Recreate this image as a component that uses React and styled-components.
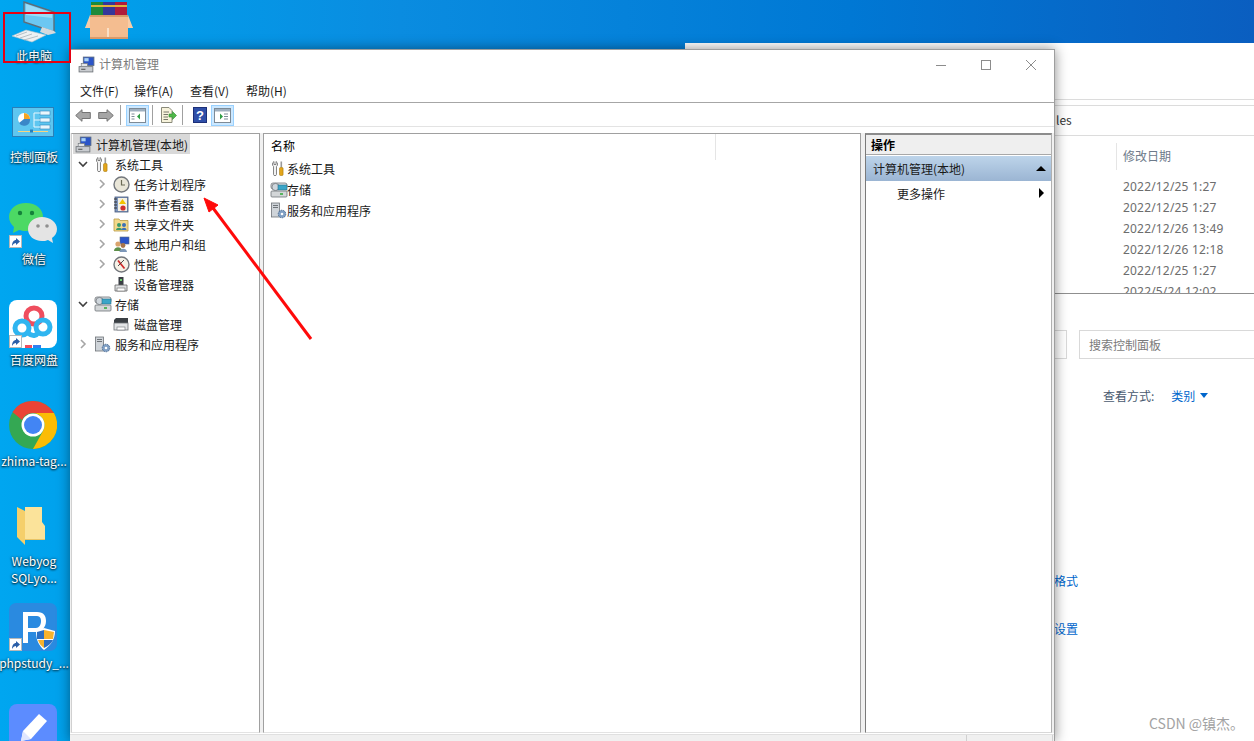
import { createGlobalStyle } from 'styled-components';
import styled from 'styled-components';

const UI_FONT = `"Noto Sans CJK SC", "Noto Sans", sans-serif`;

const dates = ['2022/12/25 1:27', '2022/12/25 1:27', '2022/12/26 13:49', '2022/12/26 12:18', '2022/12/25 1:27', '2022/5/24 12:02'];

function Shortcut() {
    return (
        <svg width="13" height="13" viewBox="0 0 13 13">
            <rect x="0.5" y="0.5" width="12" height="12" fill="#fff" stroke="#b8b8b8" />
            <path d="M3 11 C3 7 5 5 7 5 L7 3 L11 6.5 L7 10 L7 8 C5.5 8 4 9 3 11Z" fill="#2a5ea8" />
        </svg>
    );
}

function ComputerDesk() {
    return (
        <svg width="48" height="44" viewBox="0 0 48 44">
            <path d="M12 2 L42 12 L42 32 L12 22Z" fill="#6cc7f2" stroke="#5d6d78" strokeWidth="1.4" />
            <path d="M14 4 L40 13 L40 18 L14 15Z" fill="#9bdcf8" />
            <path d="M30 27 L42 31 L44 33 L36 35 L28 32Z" fill="#d5dade" />
            <path d="M0 36 L14 30 L34 35 L20 42Z" fill="#eef1f3" stroke="#b9c2c8" strokeWidth="0.6" />
            <path d="M4 36 L15 32 M8 38 L20 34 M12 40 L26 36" stroke="#aab3b9" strokeWidth="0.8" />
        </svg>
    );
}

function BooksBox() {
    return (
        <svg width="48" height="40" viewBox="0 0 48 40">
            <rect x="6" y="2" width="12" height="18" fill="#1f8a3a" />
            <rect x="18" y="2" width="12" height="18" fill="#35379a" />
            <rect x="30" y="2" width="12" height="18" fill="#b01c3c" />
            <rect x="6" y="5" width="36" height="2" fill="#e0b23c" />
            <path d="M8 15 L40 15 L48 28 L0 28Z" fill="#eeb78c" />
            <rect x="5" y="15" width="38" height="24" fill="#f4bd90" />
            <rect x="5" y="15" width="38" height="2" fill="#d89a68" />
            <path d="M5 15 L0 28 L5 28Z M43 15 L48 28 L43 28Z" fill="#f7cda8" />
            <rect x="22" y="28" width="2" height="11" fill="#fbe0c6" />
            <rect x="5" y="37" width="38" height="2" fill="#dd9c6c" />
        </svg>
    );
}

function ControlPanel() {
    return (
        <svg width="42" height="30" viewBox="0 0 42 30">
            <rect x="0.5" y="0.5" width="41" height="29" fill="#5ec6f0" stroke="#2a7fb8" />
            <circle cx="12" cy="12" r="6" fill="#fff" />
            <path d="M12 12 L12 6 A6 6 0 0 1 18 12Z" fill="#f5a524" />
            <path d="M12 12 L18 12 A6 6 0 0 1 7 16Z" fill="#3a87c8" />
            <rect x="28" y="4" width="10" height="4" fill="#e8f6fd" stroke="#2a7fb8" strokeWidth="0.6" />
            <rect x="28" y="11" width="10" height="4" fill="#e8f6fd" stroke="#2a7fb8" strokeWidth="0.6" />
            <rect x="28" y="18" width="10" height="4" fill="#e8f6fd" stroke="#2a7fb8" strokeWidth="0.6" />
            <path d="M22 6 L28 6 M22 6 L22 20 L28 20 M22 13 L28 13" stroke="#e8f6fd" fill="none" />
            <rect x="6" y="24" width="30" height="1" fill="#f7d580" />
            <rect x="18" y="22.500" width="3" height="3" fill="#2a7fb8" />
        </svg>
    );
}

function WeChat() {
    return (
        <svg width="48" height="41" viewBox="0 0 48 41">
            <path d="M17 0 C27 0 34 6 34 14 C34 22 27 28 17 28 C14 28 12 27.500 10 27 L4 30 L5 24 C2 21 0 18 0 14 C0 6 7 0 17 0Z" fill="#4cd964" />
            <circle cx="11" cy="10" r="2.200" fill="#14823a" />
            <circle cx="23" cy="10" r="2.200" fill="#14823a" />
            <path d="M33 14 C41 14 48 19 48 26 C48 30 46 33 43 35 L44 40 L39 37 C37 38 35 38 33 38 C25 38 19 33 19 26 C19 19 25 14 33 14Z" fill="#e4e4e4" />
            <circle cx="29" cy="23" r="1.800" fill="#8f8f8f" />
            <circle cx="38" cy="23" r="1.800" fill="#8f8f8f" />
        </svg>
    );
}

function BaiduDisk() {
    return (
        <svg width="48" height="48" viewBox="0 0 48 48">
            <rect width="48" height="48" rx="8" fill="#fff" />
            <circle cx="25" cy="16" r="8" fill="none" stroke="#ef4e5e" strokeWidth="5" />
            <circle cx="13" cy="28" r="7" fill="none" stroke="#2fb5f0" strokeWidth="5" />
            <circle cx="34" cy="27" r="7" fill="none" stroke="#2fb5f0" strokeWidth="5" />
            <path d="M19 33 C24 37 27 36 30 32" fill="none" stroke="#2fb5f0" strokeWidth="5" />
            <rect x="16" y="45" width="7" height="3" fill="#ef4e5e" />
            <rect x="24" y="45" width="8" height="3" fill="#2f7ff0" />
        </svg>
    );
}

function Chrome() {
    return (
        <svg width="48" height="48" viewBox="0 0 48 48">
            <circle cx="24" cy="24" r="24" fill="#34a853" />
            <path d="M24 0 A24 24 0 0 1 45 12 L24 12 A12 12 0 0 0 13 19 L3.500 11 A24 24 0 0 1 24 0Z" fill="#ea4335" />
            <path d="M45 12 A24 24 0 0 1 24 48 L34 30 A12 12 0 0 0 24 12Z" fill="#fbbc05" />
            <circle cx="24" cy="24" r="11.500" fill="#fff" />
            <circle cx="24" cy="24" r="9" fill="#4285f4" />
        </svg>
    );
}

function Folder() {
    return (
        <svg width="28" height="39" viewBox="0 0 28 39">
            <path d="M8 1 L25 1 L25 16 L28 20 L28 33 L8 33Z" fill="#fbe39a" />
            <path d="M0 1 L8 5 L8 39 L0 31Z" fill="#f5cf6b" />
            <path d="M8 33 L28 33 L28 34 L8 34Z" fill="#e8c466" />
        </svg>
    );
}

function PhpStudy() {
    return (
        <svg width="48" height="48" viewBox="0 0 48 48">
            <rect width="48" height="48" rx="7" fill="#2a8ae0" />
            <path d="M14 9 L28 9 C35 9 37 13 37 18 C37 24 33 29 27 29 L19 29 L19 40 L14 40Z M19 13 L19 25 L27 25 C30 25 32 22 32 18 C32 14 30 13 27 13Z" fill="#fff" />
            <path d="M27 28 L35 25 L46 28 C46 36 42 42 35 47 C30 43 27 37 27 28Z" fill="#fff" />
            <path d="M28 29 L35 27 L35 36 L28 36Z" fill="#2a6fc4" />
            <path d="M35 27 L45 29 L44 36 L35 36Z" fill="#f6b22d" />
            <path d="M29 37 L35 37 L35 45 C32 43 30 40 29 37Z" fill="#f6b22d" />
            <path d="M35 37 L44 37 C42 41 39 43 35 45Z" fill="#2a6fc4" />
        </svg>
    );
}

function PenApp() {
    return (
        <svg width="48" height="48" viewBox="0 0 48 48">
            <rect width="48" height="48" rx="8" fill="#5c8cff" />
            <path d="M30 10 L38 17 L22 35 L12 37 L14 27Z" fill="#fff" />
            <path d="M14 27 L22 35 L12 37Z" fill="#dfe6ff" />
        </svg>
    );
}

function MmcSmall() {
    return (
        <svg width="17" height="17" viewBox="0 0 16 16">
            <rect x="5" y="1" width="10" height="8" fill="#2b55c8" stroke="#5a6b80" strokeWidth="0.8" />
            <rect x="6" y="2" width="4" height="3" fill="#a9d2f5" />
            <rect x="1" y="10" width="13" height="5" fill="#c9ccd0" stroke="#6e7378" strokeWidth="0.8" />
            <rect x="3" y="7" width="6" height="3" fill="#e3e5e7" stroke="#6e7378" strokeWidth="0.6" />
            <rect x="3" y="12" width="4" height="1" fill="#555" />
        </svg>
    );
}

function Tools() {
    return (
        <svg width="16" height="17" viewBox="0 0 16 16">
            <path d="M4 1 L4 4 L6 4 L6 1 C8 2 8 5 6.500 6 L6.500 14 C6.500 15.500 3.500 15.500 3.500 14 L3.500 6 C2 5 2 2 4 1Z" fill="#f2f2f2" stroke="#6a6a6a" strokeWidth="0.8" />
            <rect x="10.500" y="1" width="1.600" height="6" fill="#9a9a9a" />
            <rect x="9.500" y="7" width="3.600" height="8" rx="1" fill="#e3a51a" stroke="#9a6c00" strokeWidth="0.5" />
        </svg>
    );
}

function Clock() {
    return (
        <svg width="17" height="17" viewBox="0 0 17 17">
            <circle cx="8.500" cy="8.500" r="7.500" fill="#e9e6d8" stroke="#73777c" strokeWidth="1.400" />
            <path d="M8.500 4 L8.500 9 L12 9" fill="none" stroke="#6b6a55" strokeWidth="1.200" />
        </svg>
    );
}

function EventLog() {
    return (
        <svg width="16" height="17" viewBox="0 0 16 17">
            <rect x="2" y="1" width="13" height="15" fill="#7f96bd" stroke="#45587c" strokeWidth="0.8" />
            <rect x="5" y="2" width="9" height="13" fill="#f3f0e4" />
            <path d="M1 3 H4 M1 6 H4 M1 9 H4 M1 12 H4" stroke="#333" />
            <path d="M9.500 3 L13 8 L6 8Z" fill="#f2c200" />
            <circle cx="10" cy="12" r="2.600" fill="#cf2f2f" />
        </svg>
    );
}

function SharedFolder() {
    return (
        <svg width="17" height="16" viewBox="0 0 17 16">
            <path d="M1 3 L6 3 L7 4.500 L15 4.500 L15 15 L1 15Z" fill="#f3d98b" stroke="#b79a45" strokeWidth="0.8" />
            <circle cx="6" cy="9" r="2" fill="#3a9a6b" />
            <path d="M3 14 C3 11 9 11 9 14Z" fill="#3a9a6b" />
            <circle cx="11" cy="9" r="2" fill="#3d71b8" />
            <path d="M8.500 14 C8.500 11 13.500 11 13.500 14Z" fill="#3d71b8" />
        </svg>
    );
}

function UsersIcon() {
    return (
        <svg width="17" height="17" viewBox="0 0 17 17">
            <rect x="7" y="1" width="9" height="7" fill="#2b55c8" stroke="#5a6b80" strokeWidth="0.6" />
            <circle cx="5" cy="8" r="2.600" fill="#d9a36d" />
            <path d="M1 15 C1 10 9 10 9 15Z" fill="#5c8f4a" />
            <circle cx="10" cy="9.500" r="2.400" fill="#a8754a" />
            <path d="M6.500 16 C6.500 11.500 14 11.500 14 16Z" fill="#7d97b8" />
        </svg>
    );
}

function Perf() {
    return (
        <svg width="17" height="17" viewBox="0 0 17 17">
            <circle cx="8.500" cy="8.500" r="7.500" fill="#f5f1e6" stroke="#73777c" strokeWidth="1.400" />
            <path d="M5 4.500 L11.500 12.500" stroke="#d02a2a" strokeWidth="1.800" />
            <path d="M5 10 L8 7 L11 4" stroke="#3b3b3b" strokeWidth="0.9" fill="none" />
        </svg>
    );
}

function DeviceMgr() {
    return (
        <svg width="16" height="16" viewBox="0 0 16 16">
            <rect x="5.500" y="1" width="5" height="8" fill="#3a3f44" />
            <rect x="7" y="3" width="2" height="2" fill="#6fd06f" />
            <path d="M2 9 L14 9 L14 15 L2 15Z" fill="#dfe1e3" stroke="#666" strokeWidth="0.8" />
            <rect x="4" y="12" width="8" height="3" fill="#fff" stroke="#666" strokeWidth="0.6" />
        </svg>
    );
}

function Storage() {
    return (
        <svg width="18" height="16" viewBox="0 0 18 16">
            <rect x="1" y="1" width="16" height="6" rx="2" fill="#e0e2e4" stroke="#6e7378" strokeWidth="0.8" />
            <circle cx="5.500" cy="5" r="3.600" fill="#cfd6dc" stroke="#6e7378" strokeWidth="0.8" />
            <rect x="8" y="3" width="9" height="5" fill="#3aa5c8" stroke="#2a6f8a" strokeWidth="0.6" />
            <rect x="1" y="9" width="16" height="6" rx="1" fill="#d3d6d8" stroke="#6e7378" strokeWidth="0.8" />
            <rect x="10" y="11" width="3" height="2" fill="#57b45f" />
        </svg>
    );
}

function Disk() {
    return (
        <svg width="16" height="16" viewBox="0 0 16 16">
            <path d="M3 2 L15 2 L15 7 L1 7 L1 4Z" fill="#3a3f44" />
            <rect x="1" y="7" width="14" height="7" fill="#e3e5e7" stroke="#6e7378" strokeWidth="0.8" />
            <rect x="4" y="11" width="8" height="3" fill="#fff" stroke="#6e7378" strokeWidth="0.6" />
        </svg>
    );
}

function Services() {
    return (
        <svg width="17" height="17" viewBox="0 0 17 17">
            <rect x="1.500" y="1" width="8" height="14" fill="#cfd4d9" stroke="#6e7378" strokeWidth="0.8" />
            <path d="M3 3.500 H8 M3 5.500 H8" stroke="#6e7378" />
            <circle cx="12" cy="12" r="3.800" fill="#7f9fc4" stroke="#3f5f86" strokeWidth="0.8" strokeDasharray="1.500 0.800" />
            <circle cx="12" cy="12" r="1.300" fill="#fff" />
        </svg>
    );
}

function NavArrow({ flip }) {
    return (
        <svg width="16" height="13" viewBox="0 0 16 13" style={flip ? { transform: 'scaleX(-1)' } : undefined}>
            <path d="M0.700 6.500 L7 0.700 L7 3.500 L15.300 3.500 L15.300 9.500 L7 9.500 L7 12.300Z" fill="#a6a6a6" stroke="#747474" />
        </svg>
    );
}

function TreePaneIcon({ right }) {
    return (
        <svg width="17" height="15" viewBox="0 0 17 15">
            <rect x="0.500" y="0.500" width="16" height="14" fill="#fff" stroke="#7d8a96" />
            <rect x="1" y="1" width="15" height="2.500" fill="#9fb0c0" />
            <path d={right ? 'M10 6 L14 6 M10 8.500 L14 8.500 M10 11 L14 11' : 'M2.500 6 L5.500 6 M2.500 8.500 L5.500 8.500 M2.500 11 L5.500 11'} stroke="#7d8a96" />
            <path d={right ? 'M6 5.500 L9 8.500 L6 11.500Z' : 'M11 5.500 L8 8.500 L11 11.500Z'} fill="#2f9e44" />
        </svg>
    );
}

function ExportIcon() {
    return (
        <svg width="17" height="16" viewBox="0 0 17 16">
            <path d="M1.500 0.500 L9 0.500 L12 3.500 L12 15.500 L1.500 15.500Z" fill="#f7f3dc" stroke="#8a8a7a" />
            <path d="M3.500 5 H9 M3.500 7.500 H8 M3.500 10 H8 M3.500 12.500 H8" stroke="#77776a" />
            <path d="M9 7 L12.500 7 L12.500 4.500 L16.500 8.500 L12.500 12.500 L12.500 10 L9 10Z" fill="#4fb848" stroke="#2f8a2f" strokeWidth="0.6" />
        </svg>
    );
}

function HelpIcon() {
    return (
        <svg width="14" height="16" viewBox="0 0 14 16">
            <rect width="14" height="16" fill="#2f4fa8" />
            <rect x="0.500" y="0.500" width="13" height="15" fill="none" stroke="#1c2f78" />
            <text x="7" y="12.500" textAnchor="middle" fontSize="13" fontWeight="700" fill="#fff" fontFamily="Liberation Sans, sans-serif">?</text>
        </svg>
    );
}

function Chevron({ open }) {
    return (
        <svg width="10" height="10" viewBox="0 0 10 10">
            {open
                ? <path d="M1 3 L5 7 L9 3" fill="none" stroke="#404040" strokeWidth="1.600" />
                : <path d="M3 1 L7 5 L3 9" fill="none" stroke="#a6a6a6" strokeWidth="1.600" />}
        </svg>
    );
}

const desktopIcons = [
    { top: 0, left: 0, art: <ComputerDesk />, artLeft: 12, lines: ['此电脑'], labelTop: 47 },
    { top: 0, left: 85, art: <BooksBox />, artLeft: 0, lines: [] },
    { top: 107, left: 0, art: <ControlPanel />, artLeft: 12, lines: ['控制面板'], labelTop: 41 },
    { top: 203, left: 0, art: <WeChat />, artLeft: 9, lines: ['微信'], labelTop: 47, shortcut: 32 },
    { top: 300, left: 0, art: <BaiduDisk />, artLeft: 9, lines: ['百度网盘'], labelTop: 51, shortcut: 35 },
    { top: 401, left: 0, art: <Chrome />, artLeft: 9, lines: ['zhima-tag...'], labelTop: 51 },
    { top: 506, left: 0, art: <Folder />, artLeft: 17, lines: ['Webyog', 'SQLyo...'], labelTop: 46 },
    { top: 603, left: 0, art: <PhpStudy />, artLeft: 9, lines: ['phpstudy_...'], labelTop: 51, shortcut: 35 },
    { top: 704, left: 0, art: <PenApp />, artLeft: 9, lines: [] },
];

const treeRows = [
    { label: '系统工具', level: 0, open: true, icon: <Tools /> },
    { label: '任务计划程序', level: 1, icon: <Clock /> },
    { label: '事件查看器', level: 1, icon: <EventLog /> },
    { label: '共享文件夹', level: 1, icon: <SharedFolder /> },
    { label: '本地用户和组', level: 1, icon: <UsersIcon /> },
    { label: '性能', level: 1, icon: <Perf /> },
    { label: '设备管理器', level: 1, leaf: true, icon: <DeviceMgr /> },
    { label: '存储', level: 0, open: true, icon: <Storage /> },
    { label: '磁盘管理', level: 1, leaf: true, icon: <Disk /> },
    { label: '服务和应用程序', level: 0, icon: <Services /> },
];

const listRows = [
    { label: '系统工具', icon: <Tools /> },
    { label: '存储', icon: <Storage /> },
    { label: '服务和应用程序', icon: <Services /> },
];

export default function App() {
    return (
        <>
            <GlobalStyle />
            <Desktop>
                {desktopIcons.map((item, index) => (
                    <DesktopIcon key={index} $top={item.top} $left={item.left}>
                        <IconArt $left={item.artLeft}>
                            {item.art}
                            {item.shortcut && <ShortcutBadge $top={item.shortcut}><Shortcut /></ShortcutBadge>}
                        </IconArt>
                        {item.lines.length > 0 && (
                            <IconLabel $top={item.labelTop}>
                                {item.lines.map((line) => <div key={line}>{line}</div>)}
                            </IconLabel>
                        )}
                    </DesktopIcon>
                ))}

                <ExplorerWindow>
                    <ExplorerLine $top={56} />
                    <ExplorerLine $top={62} />
                    <ExplorerLine $top={92} />
                    <PathTail>les</PathTail>
                    <ColumnHead>修改日期</ColumnHead>
                    <DateList>
                        {dates.map((date, index) => <DateRow key={index}>{date}</DateRow>)}
                    </DateList>
                </ExplorerWindow>

                <ControlWindow>
                    <SearchRow>
                        <SearchStub />
                        <SearchBox>搜索控制面板</SearchBox>
                    </SearchRow>
                    <ViewRow>
                        <span>查看方式:</span>
                        <ViewLink>类别</ViewLink>
                        <ViewCaret />
                    </ViewRow>
                    <PanelLink $top={278}>格式</PanelLink>
                    <PanelLink $top={326}>设置</PanelLink>
                </ControlWindow>

                <Watermark>CSDN @镇杰。</Watermark>

                <MmcWindow>
                    <TitleBar>
                        <MmcSmall />
                        <TitleText>计算机管理</TitleText>
                        <WindowButtons>
                            <svg width="12" height="12" viewBox="0 0 12 12"><path d="M1 6.500 H11" stroke="#8c8c8c" /></svg>
                            <svg width="12" height="12" viewBox="0 0 12 12"><rect x="1.500" y="1.500" width="9" height="9" fill="none" stroke="#8c8c8c" /></svg>
                            <svg width="12" height="12" viewBox="0 0 12 12"><path d="M1 1 L11 11 M11 1 L1 11" stroke="#8c8c8c" /></svg>
                        </WindowButtons>
                    </TitleBar>
                    <MenuBar>
                        <MenuItem $width={54}>文件(F)</MenuItem>
                        <MenuItem $width={56}>操作(A)</MenuItem>
                        <MenuItem $width={56}>查看(V)</MenuItem>
                        <MenuItem $width={60}>帮助(H)</MenuItem>
                    </MenuBar>
                    <ToolBar>
                        <ToolSlot><NavArrow /></ToolSlot>
                        <ToolSlot $gap={7}><NavArrow flip /></ToolSlot>
                        <ToolSep $gap={6} />
                        <ToolButton $gap={5} $active><TreePaneIcon /></ToolButton>
                        <ToolSep $gap={3} />
                        <ToolButton $gap={4}><ExportIcon /></ToolButton>
                        <ToolSep $gap={2} />
                        <ToolButton $gap={5}><HelpIcon /></ToolButton>
                        <ToolButton $active><TreePaneIcon right /></ToolButton>
                    </ToolBar>
                    <Panes>
                        <TreePane>
                            <TreeRow>
                                <RootLabel>
                                    <MmcSmall />
                                    <span>计算机管理(本地)</span>
                                </RootLabel>
                            </TreeRow>
                            {treeRows.map((row) => (
                                <TreeRow key={row.label} $level={row.level}>
                                    <ChevronSlot>{!row.leaf && <Chevron open={row.open} />}</ChevronSlot>
                                    <TreeIcon>{row.icon}</TreeIcon>
                                    <span>{row.label}</span>
                                </TreeRow>
                            ))}
                        </TreePane>
                        <ListPane>
                            <ListHead>
                                <NameColumn>名称</NameColumn>
                            </ListHead>
                            {listRows.map((row) => (
                                <ListRow key={row.label}>
                                    <ListIcon>{row.icon}</ListIcon>
                                    <span>{row.label}</span>
                                </ListRow>
                            ))}
                        </ListPane>
                        <ActionPane>
                            <ActionHead>操作</ActionHead>
                            <ActionGroup>
                                <span>计算机管理(本地)</span>
                                <CaretUp />
                            </ActionGroup>
                            <ActionRow>
                                <span>更多操作</span>
                                <CaretRight />
                            </ActionRow>
                        </ActionPane>
                    </Panes>
                    <StatusBar>
                        <StatusCell $width={896} />
                        <StatusCell $width={85} />
                    </StatusBar>
                </MmcWindow>

                <RedBox />
                <ArrowMark width="112" height="146" viewBox="0 0 112 146">
                    <path d="M108 142 L10 11" stroke="#ff0a0a" strokeWidth="3" fill="none" />
                    <path d="M1 1 L15 8 L6 15Z" fill="#ff0a0a" stroke="#ff0a0a" strokeWidth="1" />
                </ArrowMark>
            </Desktop>
        </>
    );
}

const GlobalStyle = createGlobalStyle`
    html, body {
        margin: 0;
        padding: 0;
        overflow: hidden;
    }
    body {
        font-family: ${UI_FONT};
        font-size: 12px;
    }
`;

const Desktop = styled.div`
    position: relative;
    width: 1254px;
    height: 741px;
    overflow: hidden;
    background: linear-gradient(to right, #00a6f0 0, #00a1ec 70px, #0a8ce0 400px, #0078d4 850px, #0a5ec0 1254px);
`;

const DesktopIcon = styled.div`
    position: absolute;
    top: ${(p) => p.$top}px;
    left: ${(p) => p.$left}px;
`;

const IconArt = styled.div`
    position: relative;
    margin-left: ${(p) => p.$left}px;
    line-height: 0;
`;

const ShortcutBadge = styled.div`
    position: absolute;
    left: 0;
    top: ${(p) => p.$top}px;
`;

const IconLabel = styled.div`
    position: absolute;
    top: ${(p) => p.$top}px;
    left: -3px;
    width: 74px;
    text-align: center;
    color: #fff;
    font-size: 12px;
    line-height: 17px;
    white-space: nowrap;
    text-shadow: 0 1px 2px rgba(0, 0, 0, 0.85), 0 0 3px rgba(0, 0, 0, 0.6);
`;

const ExplorerWindow = styled.div`
    position: absolute;
    left: 685px;
    top: 43px;
    width: 569px;
    height: 250px;
    background: #fff;
    color: #6d6d6d;
    overflow: hidden;
`;

const ExplorerLine = styled.div`
    position: absolute;
    left: 0;
    right: 0;
    top: ${(p) => p.$top}px;
    height: 1px;
    background: #dcdcdc;
`;

const PathTail = styled.div`
    position: absolute;
    left: 371px;
    top: 68px;
    color: #333;
    line-height: 18px;
`;

const ColumnHead = styled.div`
    position: absolute;
    left: 431px;
    top: 100px;
    height: 27px;
    padding-left: 6px;
    line-height: 25px;
    border-left: 1px solid #e5e5e5;
    color: #6d7a8a;
`;

const DateList = styled.div`
    position: absolute;
    left: 438px;
    top: 133px;
    display: flex;
    flex-direction: column;
    font-family: "Noto Sans", sans-serif;
    letter-spacing: 0.18px;
`;

const DateRow = styled.div`
    height: 21px;
    line-height: 21px;
    white-space: nowrap;
`;

const ControlWindow = styled.div`
    position: absolute;
    left: 685px;
    top: 293px;
    width: 569px;
    height: 448px;
    background: #fff;
    border-top: 1px solid #8f8f8f;
    box-sizing: border-box;
`;

const SearchRow = styled.div`
    position: absolute;
    left: 370px;
    top: 36px;
    display: flex;
    gap: 12px;
`;

const SearchStub = styled.div`
    width: 12px;
    height: 29px;
    box-sizing: border-box;
    border: 1px solid #d9d9d9;
    border-left: none;
`;

const SearchBox = styled.div`
    width: 175px;
    height: 29px;
    box-sizing: border-box;
    border: 1px solid #d9d9d9;
    border-right: none;
    padding-left: 9px;
    line-height: 27px;
    color: #7a7a7a;
`;

const ViewRow = styled.div`
    position: absolute;
    left: 418px;
    top: 92px;
    display: flex;
    align-items: center;
    height: 18px;
    color: #4a5a70;
`;

const ViewLink = styled.span`
    margin-left: 17px;
    color: #0066cc;
`;

const ViewCaret = styled.span`
    margin-left: 5px;
    width: 0;
    height: 0;
    border-left: 4px solid transparent;
    border-right: 4px solid transparent;
    border-top: 5px solid #0066cc;
`;

const PanelLink = styled.div`
    position: absolute;
    left: 369px;
    top: ${(p) => p.$top}px;
    color: #0066cc;
    line-height: 18px;
`;

const Watermark = styled.div`
    position: absolute;
    left: 1149px;
    top: 714px;
    color: #a3a3a3;
    font-size: 14px;
    line-height: 18px;
    white-space: nowrap;
`;

const MmcWindow = styled.div`
    position: absolute;
    left: 70px;
    top: 49px;
    width: 985px;
    height: 692px;
    box-sizing: border-box;
    display: flex;
    flex-direction: column;
    background: #fff;
    border-top: 1px solid #9e9e9e;
    border-right: 1px solid #9e9e9e;
    box-shadow: 0 0 12px rgba(0, 0, 0, 0.45);
    color: #000;
`;

const TitleBar = styled.div`
    flex: 0 0 29px;
    display: flex;
    align-items: center;
    padding-left: 8px;
`;

const TitleText = styled.span`
    margin: 0 0 2px 4px;
    color: #7b7b7b;
`;

const WindowButtons = styled.div`
    margin-left: auto;
    margin-right: 17px;
    display: flex;
    gap: 33px;
`;

const MenuBar = styled.div`
    flex: 0 0 24px;
    display: flex;
    align-items: center;
    padding-left: 10px;
    box-sizing: border-box;
    border-bottom: 1px solid #a6a6a6;
    color: #1a1a1a;
`;

const MenuItem = styled.div`
    width: ${(p) => p.$width}px;
`;

const ToolBar = styled.div`
    flex: 0 0 24px;
    box-sizing: border-box;
    display: flex;
    align-items: center;
    padding: 1px 0 0 5px;
    border-bottom: 1px solid #e3e3e3;
`;

const ToolSlot = styled.div`
    margin-left: ${(p) => p.$gap || 0}px;
    line-height: 0;
`;

const ToolSep = styled.div`
    width: 1px;
    height: 20px;
    margin-left: ${(p) => p.$gap || 0}px;
    background: #a0a0a0;
`;

const ToolButton = styled.div`
    width: 23px;
    height: 21px;
    margin-left: ${(p) => p.$gap || 0}px;
    box-sizing: border-box;
    display: flex;
    align-items: center;
    justify-content: center;
    background: ${(p) => (p.$active ? '#cce8ff' : 'transparent')};
    border: 1px solid ${(p) => (p.$active ? '#99d1ff' : 'transparent')};
`;

const Panes = styled.div`
    flex: 0 0 600px;
    display: flex;
    margin-top: 6px;
    padding-left: 1px;
    background: #f0f0f0;
`;

const TreePane = styled.div`
    width: 189px;
    box-sizing: border-box;
    background: #fff;
    border: 1px solid #a0a0a0;
    border-left-color: #d0d0d0;
    border-bottom-color: #e3e3e3;
`;

const TreeRow = styled.div`
    height: 20px;
    display: flex;
    align-items: center;
    padding-left: ${(p) => 6 + (p.$level || 0) * 19}px;
    color: #1a1a1a;
    white-space: nowrap;
`;

const RootLabel = styled.div`
    height: 20px;
    display: flex;
    align-items: center;
    gap: 4px;
    width: 117px;
    margin-left: -5px;
    padding-left: 2px;
    box-sizing: border-box;
    background: #d9d9d9;
`;

const ChevronSlot = styled.div`
    width: 10px;
    height: 10px;
    line-height: 0;
    flex: none;
`;

const TreeIcon = styled.div`
    width: 17px;
    margin: 0 4px 0 6px;
    line-height: 0;
    flex: none;
`;

const ListPane = styled.div`
    width: 598px;
    margin-left: 3px;
    box-sizing: border-box;
    background: #fff;
    border: 1px solid #a0a0a0;
    border-bottom-color: #e3e3e3;
`;

const ListHead = styled.div`
    height: 24px;
    display: flex;
    align-items: flex-start;
    padding-left: 7px;
`;

const NameColumn = styled.div`
    width: 444px;
    height: 26px;
    line-height: 23px;
    border-right: 1px solid #e5e5e5;
`;

const ListRow = styled.div`
    height: 21px;
    display: flex;
    align-items: center;
    padding-left: 6px;
    color: #1a1a1a;
    white-space: nowrap;
`;

const ListIcon = styled.div`
    width: 17px;
    line-height: 0;
    flex: none;
`;

const ActionPane = styled.div`
    width: 187px;
    margin-left: 4px;
    box-sizing: border-box;
    background: #fff;
    border-top: 2px solid #8c8c8c;
    border-left: 1px solid #7a7a7a;
    border-right: 1px solid #b0b0b0;
    border-bottom: 1px solid #d8d8d8;
`;

const ActionHead = styled.div`
    height: 20px;
    box-sizing: border-box;
    padding-left: 5px;
    line-height: 19px;
    font-weight: 700;
    background: #efefef;
    border-bottom: 1px solid #a8a8a8;
    margin-bottom: 1px;
`;

const ActionGroup = styled.div`
    height: 25px;
    display: flex;
    align-items: center;
    justify-content: space-between;
    padding: 0 5px 0 7px;
    background: linear-gradient(#bdd4ea, #9bb5d3);
    color: #1a1a1a;
`;

const CaretUp = styled.span`
    width: 0;
    height: 0;
    border-left: 5px solid transparent;
    border-right: 5px solid transparent;
    border-bottom: 5px solid #000;
`;

const ActionRow = styled.div`
    height: 24px;
    display: flex;
    align-items: center;
    justify-content: space-between;
    padding: 0 7px 0 31px;
    color: #1a1a1a;
`;

const CaretRight = styled.span`
    width: 0;
    height: 0;
    border-top: 5px solid transparent;
    border-bottom: 5px solid transparent;
    border-left: 5px solid #000;
`;

const StatusBar = styled.div`
    flex: 1;
    display: flex;
    margin-top: 1px;
    background: #f0f0f0;
    border-top: 1px solid #e0e0e0;
`;

const StatusCell = styled.div`
    width: ${(p) => p.$width}px;
    border-right: 1px solid #d0d0d0;
`;

const RedBox = styled.div`
    position: absolute;
    left: 3px;
    top: 12px;
    width: 68px;
    height: 51px;
    box-sizing: border-box;
    border: 2px solid #e60012;
`;

const ArrowMark = styled.svg`
    position: absolute;
    left: 203px;
    top: 197px;
`;
